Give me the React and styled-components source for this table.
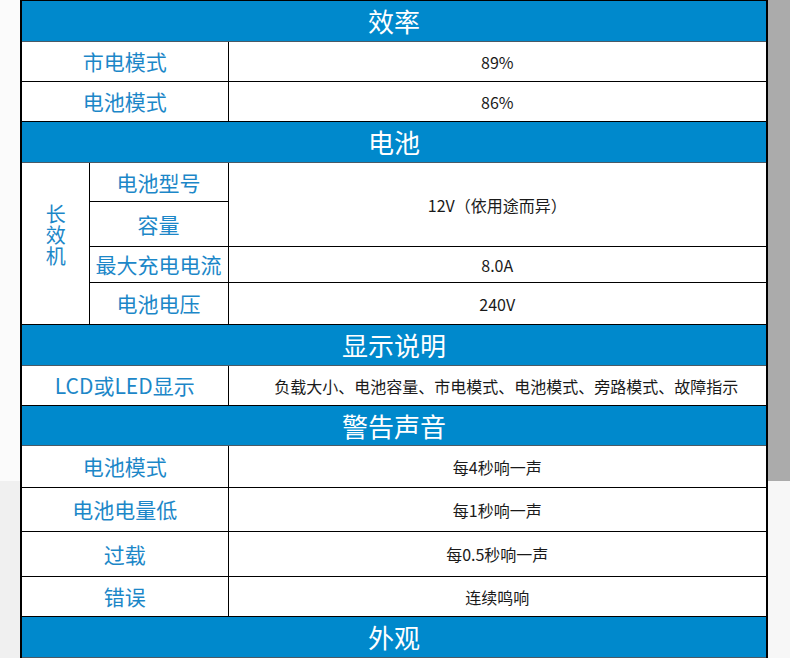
import styled, { createGlobalStyle } from "styled-components";

const GlobalStyle = createGlobalStyle`
  html, body {
    margin: 0;
    padding: 0;
    background: #fff;
    font-family: "Noto Sans CJK SC", "Noto Sans", sans-serif;
  }
`;

const Page = styled.div`
  display: flex;
  width: 790px;
  height: 658px;
  overflow: hidden;
`;

const Side = styled.div`
  width: ${(props) => props.width}px;
  flex-shrink: 0;
  display: flex;
  flex-direction: column;
`;

const SidePart = styled.div`
  height: ${(props) => props.height || "auto"};
  flex: ${(props) => (props.height ? "none" : 1)};
  background: ${(props) => props.color};
`;

const Table = styled.table`
  width: 748px;
  flex-shrink: 0;
  border-collapse: collapse;
  table-layout: fixed;
  border-left: 2px solid #000;
  border-right: 2px solid #000;
  align-self: flex-start;
`;

const Stub = styled.td`
  height: 0;
  padding: 0;
  border-left: 1px solid #000;
  border-right: 1px solid #000;
  border-bottom: 1px solid #000;
  line-height: 0;
  font-size: 0;
`;

const Header = styled.td`
  height: ${(props) => props.h || 40}px;
  padding: 0;
  background: #0089cc;
  color: #fff;
  font-size: 26px;
  line-height: 1;
  text-align: center;
  vertical-align: middle;
  border-bottom: 1px solid #4a5a66;
`;

const Label = styled.td`
  height: ${(props) => props.h || 40}px;
  padding: 0;
  color: #1c87c8;
  font-size: 21px;
  line-height: 1;
  text-align: center;
  vertical-align: middle;
  border: 1px solid #000;
  white-space: nowrap;
`;

const Vertical = styled.span`
  display: inline-block;
  writing-mode: vertical-rl;
  font-size: 20px;
  line-height: 1;
  letter-spacing: 1px;
  margin-bottom: 14px;
`;

const Value = styled.td`
  padding: 0 0 0 ${(props) => props.shift || 0}px;
  color: #1a1a1a;
  font-size: 16px;
  line-height: 1;
  text-align: center;
  vertical-align: middle;
  border: 1px solid #000;
  white-space: nowrap;
`;

const Section = ({ title, h }) => (
  <tr>
    <Header colSpan={3} h={h}>
      {title}
    </Header>
  </tr>
);

const Row = ({ label, value, h, shift }) => (
  <tr>
    <Label colSpan={2} h={h}>
      {label}
    </Label>
    <Value shift={shift}>{value}</Value>
  </tr>
);

const App = () => {
  return (
    <>
      <GlobalStyle />
      <Page>
        <Side width={20}>
          <SidePart height="481px" color="#fbfbfb" />
          <SidePart color="#f0f0f0" />
        </Side>
        <Table>
          <colgroup>
            <col style={{ width: 68 }} />
            <col style={{ width: 139 }} />
            <col />
          </colgroup>
          <tbody>
            <tr>
              <Stub colSpan={2} />
              <Stub />
            </tr>
            <Section title="效率" h={40} />
            <Row label="市电模式" value="89%" h={39} />
            <Row label="电池模式" value="86%" h={39} />
            <Section title="电池" h={40} />
            <tr>
              <Label rowSpan={4}>
                <Vertical>长效机</Vertical>
              </Label>
              <Label h={38}>电池型号</Label>
              <Value rowSpan={2}>12V（依用途而异）</Value>
            </tr>
            <tr>
              <Label h={44}>容量</Label>
            </tr>
            <tr>
              <Label h={35}>最大充电电流</Label>
              <Value>8.0A</Value>
            </tr>
            <tr>
              <Label h={41}>电池电压</Label>
              <Value>240V</Value>
            </tr>
            <Section title="显示说明" h={40} />
            <Row
              label="LCD或LED显示"
              value="负载大小、电池容量、市电模式、电池模式、旁路模式、故障指示"
              h={39}
              shift={18}
            />
            <Section title="警告声音" h={39} />
            <Row label="电池模式" value="每4秒响一声" h={41} />
            <Row label="电池电量低" value="每1秒响一声" h={43} />
            <Row label="过载" value="每0.5秒响一声" h={44} />
            <Row label="错误" value="连续鸣响" h={39} />
            <Section title="外观" h={40} />
          </tbody>
        </Table>
        <Side width={22}>
          <SidePart height="481px" color="#ababab" />
          <SidePart color="#f7f7f7" />
        </Side>
      </Page>
    </>
  );
};

export default App;
